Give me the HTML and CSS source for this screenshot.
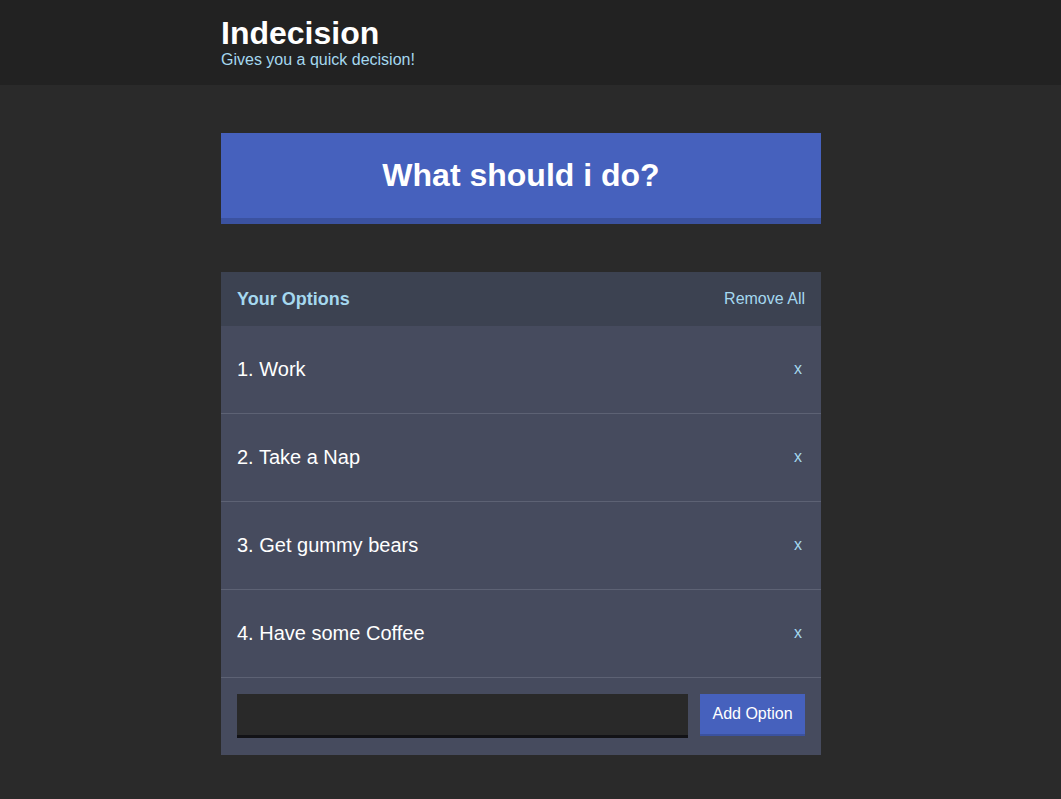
FILE: index.html
```html
<!DOCTYPE html>
<html>
<head>
<meta charset="utf-8">
<title>Indecision</title>
<link rel="stylesheet" href="styles.css">
</head>
<body>
<header class="header">
  <div class="container">
    <h1 class="header__title">Indecision</h1>
    <h2 class="header__subtitle">Gives you a quick decision!</h2>
  </div>
</header>
<main class="container">
  <button class="big-button">What should i do?</button>
  <section class="widget">
    <div class="widget-header">
      <h3 class="widget-header__title">Your Options</h3>
      <button class="button--link">Remove All</button>
    </div>
    <div class="option">
      <p class="option__text">1. Work</p>
      <button class="button--link option__remove">x</button>
    </div>
    <div class="option">
      <p class="option__text">2. Take a Nap</p>
      <button class="button--link option__remove">x</button>
    </div>
    <div class="option">
      <p class="option__text">3. Get gummy bears</p>
      <button class="button--link option__remove">x</button>
    </div>
    <div class="option">
      <p class="option__text">4. Have some Coffee</p>
      <button class="button--link option__remove">x</button>
    </div>
    <form class="add-option">
      <input class="add-option__input" type="text" name="option">
      <button class="button" type="button">Add Option</button>
    </form>
  </section>
</main>
</body>
</html>
```

FILE: styles.css
```css
* { box-sizing: border-box; }

html, body {
  margin: 0;
  padding: 0;
}

body {
  background: #2a2a2a;
  color: #ffffff;
  font-family: "Liberation Sans", Arial, sans-serif;
  min-height: 799px;
}

.container {
  width: 600px;
  margin-left: 221px;
}

.header {
  background: #222222;
  padding: 16px 0 0;
  height: 85px;
}

.header__title {
  margin: 0;
  font-size: 32px;
  line-height: 34px;
  font-weight: bold;
  color: #ffffff;
}

.header__subtitle {
  margin: 0;
  font-size: 16px;
  line-height: 20px;
  font-weight: normal;
  color: #a5d8ef;
}

.big-button {
  display: block;
  width: 100%;
  margin: 48px 0 48px;
  height: 91px;
  background: #4661bd;
  border: none;
  border-bottom: 6px solid #3b52a0;
  color: #ffffff;
  font-family: inherit;
  font-weight: bold;
  font-size: 32px;
  padding: 0 0 0;
  cursor: pointer;
}

.widget {
  background: #464b5e;
}

.widget-header {
  background: #3c4251;
  height: 54px;
  display: flex;
  align-items: center;
  justify-content: space-between;
  padding: 0 16px;
}

.widget-header__title {
  margin: 0;
  font-size: 18px;
  font-weight: bold;
  color: #a5d8ef;
}

.button--link {
  background: none;
  border: none;
  padding: 0;
  font-family: inherit;
  font-size: 16px;
  color: #a5d8ef;
  cursor: pointer;
}

.option__remove {
  margin-right: 3px;
  padding-bottom: 2px;
}

.option {
  height: 88px;
  display: flex;
  align-items: center;
  justify-content: space-between;
  padding: 0 16px;
  border-bottom: 1px solid #5d6274;
}

.option__text {
  margin: 0;
  font-size: 20px;
  color: #ffffff;
}

.add-option {
  display: flex;
  align-items: flex-start;
  gap: 12px;
  padding: 16px 16px 17px;
  margin: 0;
}

.add-option__input {
  flex: 1;
  height: 44px;
  background: #292929;
  border: none;
  border-bottom: 3px solid #121216;
  color: #ffffff;
  font-family: inherit;
  font-size: 16px;
  padding: 0 8px;
  outline: none;
}

.button {
  width: 105px;
  height: 42px;
  background: #4661bd;
  border: none;
  border-bottom: 2px solid #3b52a0;
  color: #ffffff;
  font-family: inherit;
  font-size: 16px;
  padding: 0;
  cursor: pointer;
}
```
